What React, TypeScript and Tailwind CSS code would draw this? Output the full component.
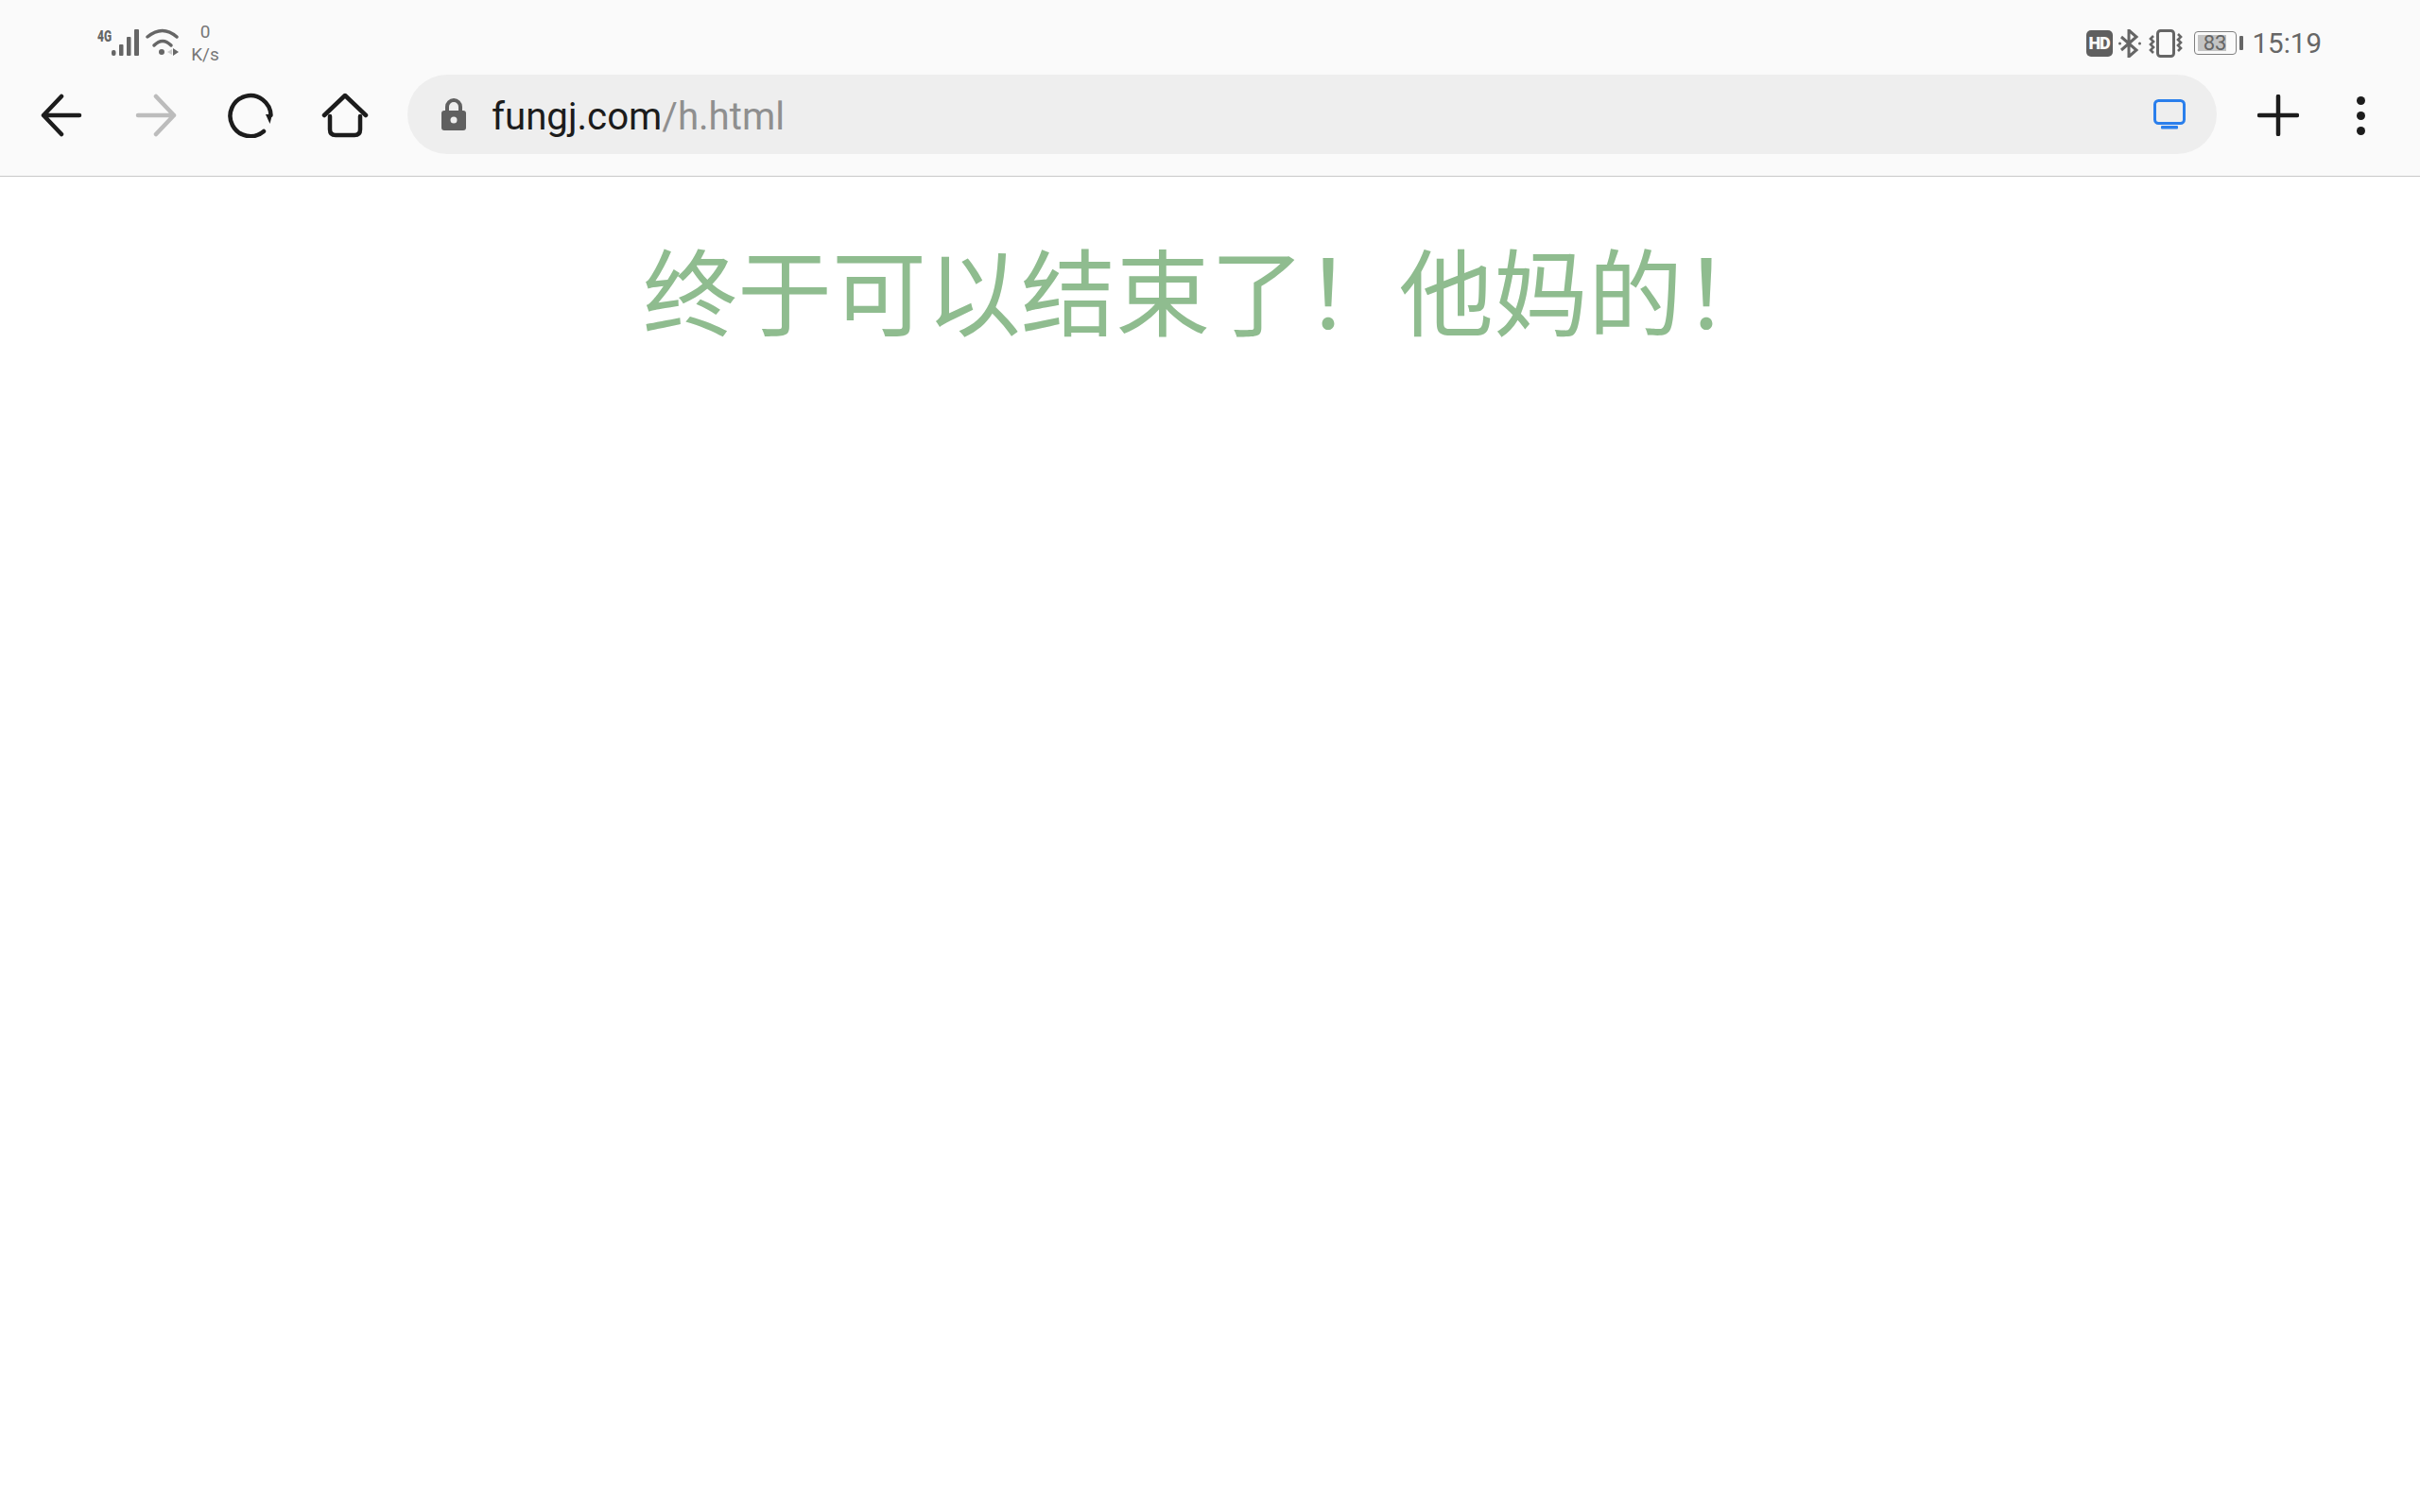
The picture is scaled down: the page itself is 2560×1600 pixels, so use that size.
const StatusLeft = () => (
  <div className="flex items-start">
    <svg width="90" height="36" viewBox="0 0 90 36" className="mt-[28px] ml-[102px] text-[#666666]" fill="currentColor">
      <text x="1" y="16" fontFamily="Roboto, sans-serif" fontWeight="900" fontSize="17" textLength="15" lengthAdjust="spacingAndGlyphs">4G</text>
      <rect x="16" y="25" width="4.5" height="6" rx="2" />
      <rect x="24" y="19" width="4.5" height="12" rx="1" />
      <rect x="32" y="11" width="4.5" height="20" rx="1" />
      <rect x="40" y="3" width="5" height="28" rx="1" />
      <path d="M54 11 Q70 -2 85 11" fill="none" stroke="currentColor" strokeWidth="3.5" strokeLinecap="round" />
      <path d="M61 20 Q70 11 79 20" fill="none" stroke="currentColor" strokeWidth="3.5" strokeLinecap="round" />
      <circle cx="69" cy="27" r="3" />
      <path d="M80 24 L80 30 L75 27 Z" fill="#cccccc" />
      <path d="M81 23 L81 31 L87 27 Z" />
    </svg>
    <div className="mt-[22px] ml-[8px] flex w-[34px] flex-col items-center text-[19px] leading-[24px] text-[#777777]">
      <span>0</span>
      <span>K/s</span>
    </div>
  </div>
);

const StatusRight = () => (
  <div className="flex items-center pr-[104px] pt-[19px] text-[#666666]">
    <div className="flex h-[28px] w-[28px] items-center justify-center rounded-[5px] bg-[#5f5f5f] text-[18px] font-black tracking-[-1px] text-[#fafafa]">
      HD
    </div>
    <svg width="24" height="30" viewBox="0 0 24 30" fill="none" stroke="currentColor" strokeWidth="3" className="ml-[6px]">
      <path d="M3 8 L19 22 L11 29 L11 1 L19 8 L3 22" />
      <circle cx="1.5" cy="15" r="1.5" fill="currentColor" stroke="none" />
      <circle cx="22.5" cy="15" r="1.5" fill="currentColor" stroke="none" />
    </svg>
    <svg width="36" height="30" viewBox="0 0 36 30" fill="none" stroke="currentColor" className="ml-[8px]">
      <rect x="9.5" y="1.5" width="17" height="27" rx="3" strokeWidth="3" />
      <path d="M5 7 L2 10 L5 13 L2 16 L5 19 L2 22 L5 25" strokeWidth="2.6" />
      <path d="M31 5 L34 8 L31 11 L34 14 L31 17 L34 20 L31 23" strokeWidth="2.6" />
    </svg>
    <div className="relative ml-[12px] flex h-[25px] w-[45px] items-center rounded-[4px] border border-[#808080] p-[3px]">
      <div className="h-full w-[83%] bg-[#c4c4c4]"></div>
      <span className="absolute inset-0 flex items-center justify-center text-[22px] text-[#666666]">83</span>
    </div>
    <div className="ml-[3px] h-[15px] w-[4px] rounded-[1px] bg-[#666666]"></div>
    <span className="ml-[10px] text-[29.5px] leading-[36px]">15:19</span>
  </div>
);

const Toolbar = () => (
  <div className="flex h-[115px] items-start border-b-[1.5px] border-[#c8c8c8] pt-[7px]">
    <div className="flex h-[84px] items-center pt-[2px]">
      <svg width="46" height="46" viewBox="0 0 46 46" fill="none" stroke="#1c1c1c" strokeWidth="4.5" strokeLinecap="round" strokeLinejoin="round" className="ml-[42px]">
        <path d="M4 23 H42 M23 3 L4 23 L23 43" />
      </svg>
      <svg width="46" height="46" viewBox="0 0 46 46" fill="none" stroke="#bcbcbc" strokeWidth="4.5" strokeLinecap="round" strokeLinejoin="round" className="ml-[54px]">
        <path d="M42 23 H4 M23 3 L42 23 L23 43" />
      </svg>
      <svg width="48" height="48" viewBox="0 0 48 48" fill="none" stroke="#1c1c1c" strokeWidth="4.5" strokeLinecap="round" className="ml-[53px]">
        <path d="M38 41 A21.5 21.5 0 1 1 45.5 24" />
        <path d="M40 23 L47 23 L44.5 33 Z" fill="#1c1c1c" stroke="none" />
      </svg>
      <svg width="50" height="48" viewBox="0 0 50 48" fill="none" stroke="#1c1c1c" strokeWidth="4.5" strokeLinecap="round" strokeLinejoin="round" className="ml-[51px]">
        <path d="M3 24 L25 3 L47 24" />
        <path d="M9 25 V39 Q9 45 15 45 H35 Q41 45 41 39 V25" />
      </svg>
    </div>
    <div className="ml-[41px] flex h-[84px] w-[1914px] items-center rounded-[42px] bg-[#eeeeee] pl-[36px] pr-[33px]">
      <svg width="26" height="34" viewBox="0 0 26 34" className="shrink-0">
        <path d="M6 14 V9 A7 7 0 0 1 20 9 V14" fill="none" stroke="#606060" strokeWidth="4" />
        <rect x="0" y="13" width="26" height="21" rx="3" fill="#606060" />
        <circle cx="13" cy="23" r="3.5" fill="#eeeeee" />
      </svg>
      <div className="ml-[27px] mt-[5px] flex-1 text-[40.2px] leading-[50px]">
        <span className="text-[#1c1c1c]">fungj.com</span>
        <span className="text-[#8f8f8f]">/h.html</span>
      </div>
      <svg width="34" height="32" viewBox="0 0 34 32" fill="none">
        <rect x="1.5" y="1.5" width="31" height="24" rx="4" stroke="#2a7fec" strokeWidth="3" />
        <rect x="8" y="28" width="18" height="3.5" rx="1" fill="#2a7fec" />
      </svg>
    </div>
    <div className="flex h-[84px] items-center pt-[2px]">
      <svg width="44" height="44" viewBox="0 0 44 44" stroke="#1c1c1c" strokeWidth="4.5" strokeLinecap="round" className="ml-[43px]">
        <path d="M22 2 V42 M2 22 H42" />
      </svg>
      <div className="ml-[61px] flex flex-col gap-[7px]">
        <div className="h-[9px] w-[9px] rounded-full bg-[#1c1c1c]"></div>
        <div className="h-[9px] w-[9px] rounded-full bg-[#1c1c1c]"></div>
        <div className="h-[9px] w-[9px] rounded-full bg-[#1c1c1c]"></div>
      </div>
    </div>
  </div>
);

export default function App() {
  return (
    <div className="min-h-screen w-full bg-white font-['Roboto',sans-serif]">
      <div className="bg-[#fafafa]">
        <div className="flex h-[72px] justify-between">
          <StatusLeft />
          <StatusRight />
        </div>
        <Toolbar />
      </div>
      <h1 className="pt-[53px] text-center font-['Noto_Sans_CJK_SC',sans-serif] text-[100px] font-normal leading-[130px] text-[#8fbc8f]">
        终于可以结束了！他妈的！
      </h1>
    </div>
  );
}
